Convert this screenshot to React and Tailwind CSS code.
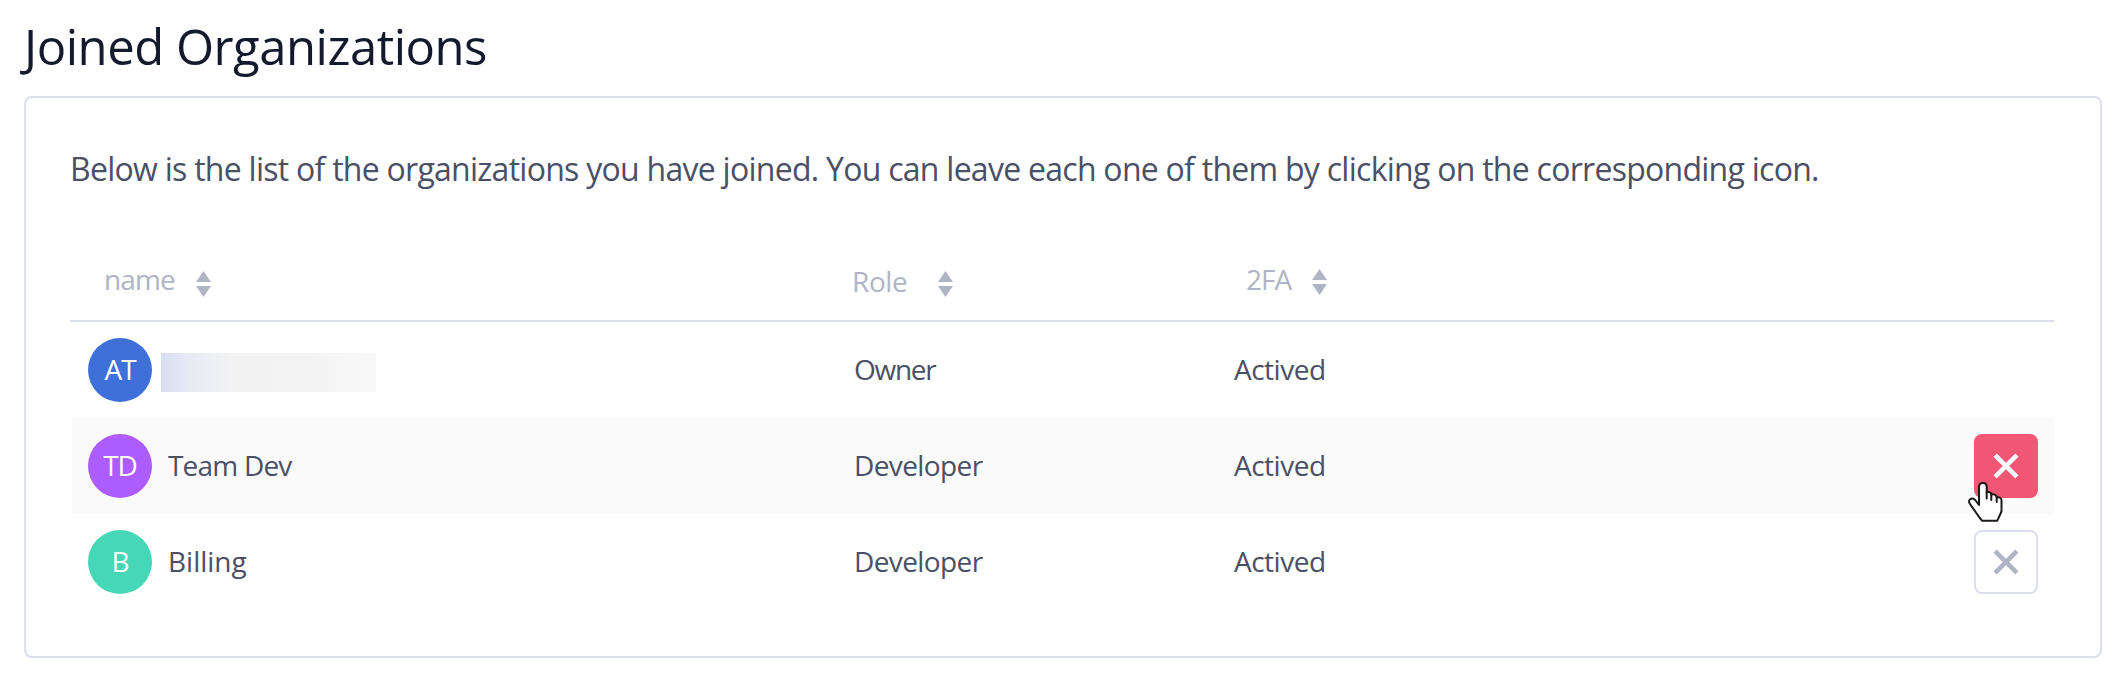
const SortIcon = ({ className }) => (
  <svg viewBox="0 0 15 26" className={`w-[15px] h-[26px] shrink-0 ${className}`} fill="#b0b4c5">
    <path d="M7.5 0 15 11H0Z" />
    <path d="M0 15h15L7.500 26Z" />
  </svg>
);

const Cross = () => (
  <svg viewBox="0 0 26 26" className="size-[26px]" stroke="currentColor" strokeWidth="4.6" fill="none">
    <path d="M2.100 2.100 23.900 23.900M23.900 2.100 2.100 23.900" />
  </svg>
);

const HandCursor = () => (
  <svg viewBox="0 0 36 42" className="absolute left-[-7px] top-[47px] w-9 h-[42px]" fill="#fff" stroke="#1a1a1a" strokeWidth="2" strokeLinejoin="round" strokeLinecap="round">
    <path d="M12 24V6c0-2.500 1.600-4 3.900-4s3.800 1.500 3.800 4v5.500c1.800-1.200 4.600-.300 4.600 2.200 2-.900 5.200 0 5.400 2.600 2.500-.500 4.800.700 4.800 3v11.200L30.300 39.700H15L12.300 36.300 3 23c-1.200-1.900-1.200-3.600.200-4.700 1.500-1.200 3.400-.900 5 .700Z" />
    <path d="M19.700 11.500v6M24.300 13.700v5.300M29.700 16.300v4.700" />
  </svg>
);

const rows = [
  { initials: "AT", color: "bg-[#3f6fd8]", role: "Owner", roleClass: "tracking-[-1.3px]" },
  { initials: "TD", color: "bg-[#ad5cff]", name: "Team Dev", nameClass: "ml-4 tracking-[-0.8px]", role: "Developer", roleClass: "tracking-[-0.6px]", active: true },
  { initials: "B", color: "bg-[#46d7b6]", name: "Billing", nameClass: "ml-4", role: "Developer", roleClass: "tracking-[-0.6px]" },
];

const grid = "grid grid-cols-[782px_381px_1fr_80px]";

function LeaveButton({ active }) {
  return (
    <button
      className={`relative flex size-16 items-center justify-center rounded-lg ${
        active ? "bg-[#f15774] text-[#fafafa]" : "border-2 border-[#dcdfeb] bg-white text-[#b0b4c5]"
      }`}
    >
      <Cross />
      {active && <HandCursor />}
    </button>
  );
}

export default function App() {
  return (
    <main className="h-[682px] w-[2122px] bg-white pl-6 font-['Open_Sans',sans-serif] text-[28px] text-[#4a5066]">
      <h1 className="flex h-24 items-center pb-1 text-[49px] leading-none tracking-[-0.48px] text-[#14192e]">
        Joined Organizations
      </h1>
      <section className="h-[562px] w-[2078px] rounded-lg border-2 border-[#dcdfeb] pl-11 pr-[46px]">
        <p className="flex h-[138px] items-center whitespace-nowrap pt-[3px] text-[32px] leading-none tracking-[-0.73px]">
          Below is the list of the organizations you have joined. You can leave each one of them by clicking on the corresponding icon.
        </p>
        <div className={`${grid} h-[86px] border-b-2 border-[#dcdfeb] text-[#b0b4c5] leading-none`}>
          <div className="flex h-[86px] items-center pl-[34px]">
            <span className="w-[92px] tracking-[-0.9px]">name</span>
            <SortIcon className="mt-[10px]" />
          </div>
          <div className="flex h-[86px] items-center">
            <span className="w-[86px] pt-1 tracking-[-0.4px]">Role</span>
            <SortIcon className="mt-[10px]" />
          </div>
          <div className="flex h-[86px] items-center pl-[13px]">
            <span className="w-[66px] tracking-[-1px]">2FA</span>
            <SortIcon className="mt-[6px]" />
          </div>
        </div>
        {rows.map((r) => (
          <div key={r.initials} className={`${grid} ml-0.5 h-24 items-center leading-none ${r.active ? "bg-[#fafafa]" : ""}`}>
            <div className="flex items-center pl-4">
              <span className={`flex size-16 items-center justify-center rounded-full pb-[2px] tracking-[-1px] text-white ${r.color}`}>
                {r.initials}
              </span>
              {r.name ? (
                <span className={`pb-[2px] ${r.nameClass}`}>{r.name}</span>
              ) : (
                <span className="ml-[9px] mt-[5px] h-[39px] w-[215px] bg-[linear-gradient(90deg,#d8def3_0%,#e9ebf4_14%,#f2f2f3_32%,#f3f3f3_70%,#f9f9f9_100%)]" />
              )}
            </div>
            <span className={`pb-[2px] ${r.roleClass}`}>{r.role}</span>
            <span className="pb-[2px] -ml-px tracking-[-0.5px]">Actived</span>
            {r.name && <LeaveButton active={r.active} />}
          </div>
        ))}
      </section>
    </main>
  );
}
